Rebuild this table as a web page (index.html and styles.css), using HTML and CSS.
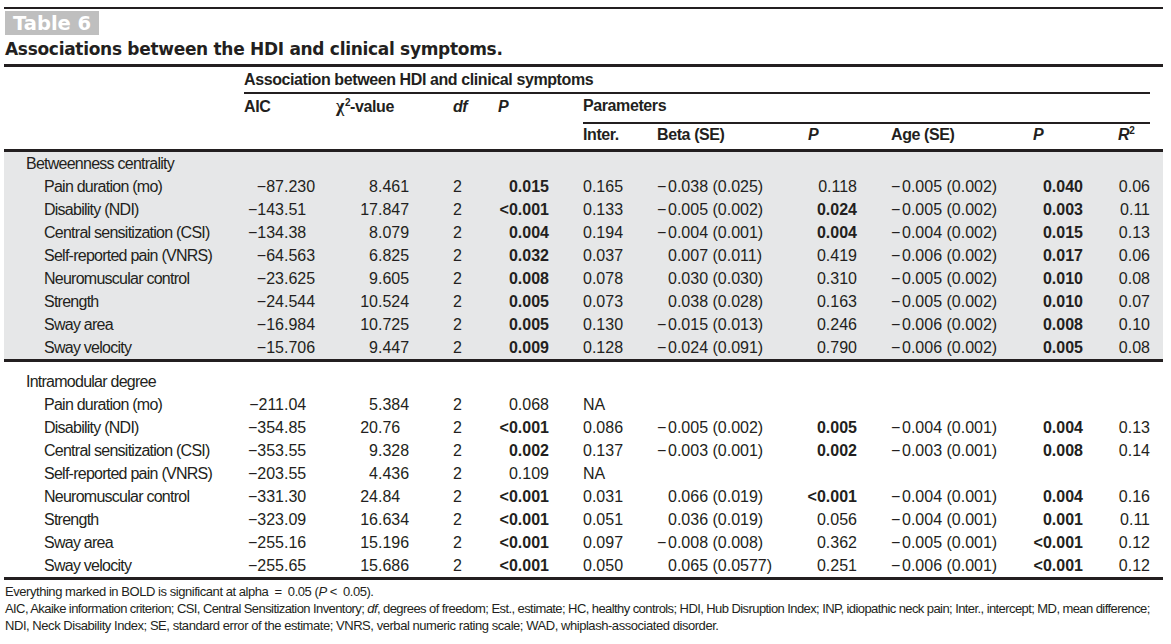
FILE: index.html
```html
<!DOCTYPE html>
<html lang="en">
<head>
<meta charset="utf-8">
<title>Table 6</title>
<link rel="stylesheet" href="styles.css">
</head>
<body>
<div class="page">
  <div class="toprule"></div>
  <div class="tag">Table 6</div>
  <h1 class="title">Associations between the HDI and clinical symptoms.</h1>
  <table class="tbl">
    <colgroup>
      <col class="w0"><col class="w1"><col class="w2"><col class="w3"><col class="w4"><col class="w5">
      <col class="w6"><col class="w7"><col class="w8"><col class="w9"><col class="w10"><col class="w11">
    </colgroup>
    <thead>
      <tr class="h1">
        <th></th>
        <th colspan="10" class="spanhead">Association between HDI and clinical symptoms</th>
        <th></th>
      </tr>
      <tr class="h2">
        <th></th>
        <th>AIC</th>
        <th><span class="chi">χ</span><sup>2</sup>-value</th>
        <th class="c-df"><i>df</i></th>
        <th class="c-p"><i>P</i></th>
        <th colspan="6" class="spanhead">Parameters</th>
        <th></th>
      </tr>
      <tr class="h3">
        <th></th><th></th><th></th><th></th><th></th>
        <th>Inter.</th>
        <th>Beta (SE)</th>
        <th class="c-p2"><i>P</i></th>
        <th>Age (SE)</th>
        <th class="c-p3"><i>P</i></th>
        <th class="c-r2"><i>R</i><sup>2</sup></th>
        <th></th>
      </tr>
    </thead>
    <tbody class="grp shaded">
      <tr><td class="grouplabel">Betweenness centrality</td><td></td><td></td><td></td><td></td><td></td><td></td><td></td><td></td><td></td><td></td><td></td></tr>
      <tr><td class="lbl">Pain duration (mo)</td><td class="n aic"><span class="ip">−87</span>.230</td><td class="n chi2"><span class="ip">8</span>.461</td><td class="n df">2</td><td class="n pv"><b>0.015</b></td><td class="n">0.165</td><td class="n"><span class="m">−</span>0.038 (0.025)</td><td class="n pv2">0.118</td><td class="n"><span class="m">−</span>0.005 (0.002)</td><td class="n pv3"><b>0.040</b></td><td class="n r2">0.06</td><td></td></tr>
      <tr><td class="lbl">Disability (NDI)</td><td class="n aic"><span class="ip">−143</span>.51</td><td class="n chi2"><span class="ip">17</span>.847</td><td class="n df">2</td><td class="n pv"><b>&lt;0.001</b></td><td class="n">0.133</td><td class="n"><span class="m">−</span>0.005 (0.002)</td><td class="n pv2"><b>0.024</b></td><td class="n"><span class="m">−</span>0.005 (0.002)</td><td class="n pv3"><b>0.003</b></td><td class="n r2">0.11</td><td></td></tr>
      <tr><td class="lbl">Central sensitization (CSI)</td><td class="n aic"><span class="ip">−134</span>.38</td><td class="n chi2"><span class="ip">8</span>.079</td><td class="n df">2</td><td class="n pv"><b>0.004</b></td><td class="n">0.194</td><td class="n"><span class="m">−</span>0.004 (0.001)</td><td class="n pv2"><b>0.004</b></td><td class="n"><span class="m">−</span>0.004 (0.002)</td><td class="n pv3"><b>0.015</b></td><td class="n r2">0.13</td><td></td></tr>
      <tr><td class="lbl">Self-reported pain (VNRS)</td><td class="n aic"><span class="ip">−64</span>.563</td><td class="n chi2"><span class="ip">6</span>.825</td><td class="n df">2</td><td class="n pv"><b>0.032</b></td><td class="n">0.037</td><td class="n"><span class="m"></span>0.007 (0.011)</td><td class="n pv2">0.419</td><td class="n"><span class="m">−</span>0.006 (0.002)</td><td class="n pv3"><b>0.017</b></td><td class="n r2">0.06</td><td></td></tr>
      <tr><td class="lbl">Neuromuscular control</td><td class="n aic"><span class="ip">−23</span>.625</td><td class="n chi2"><span class="ip">9</span>.605</td><td class="n df">2</td><td class="n pv"><b>0.008</b></td><td class="n">0.078</td><td class="n"><span class="m"></span>0.030 (0.030)</td><td class="n pv2">0.310</td><td class="n"><span class="m">−</span>0.005 (0.002)</td><td class="n pv3"><b>0.010</b></td><td class="n r2">0.08</td><td></td></tr>
      <tr><td class="lbl">Strength</td><td class="n aic"><span class="ip">−24</span>.544</td><td class="n chi2"><span class="ip">10</span>.524</td><td class="n df">2</td><td class="n pv"><b>0.005</b></td><td class="n">0.073</td><td class="n"><span class="m"></span>0.038 (0.028)</td><td class="n pv2">0.163</td><td class="n"><span class="m">−</span>0.005 (0.002)</td><td class="n pv3"><b>0.010</b></td><td class="n r2">0.07</td><td></td></tr>
      <tr><td class="lbl">Sway area</td><td class="n aic"><span class="ip">−16</span>.984</td><td class="n chi2"><span class="ip">10</span>.725</td><td class="n df">2</td><td class="n pv"><b>0.005</b></td><td class="n">0.130</td><td class="n"><span class="m">−</span>0.015 (0.013)</td><td class="n pv2">0.246</td><td class="n"><span class="m">−</span>0.006 (0.002)</td><td class="n pv3"><b>0.008</b></td><td class="n r2">0.10</td><td></td></tr>
      <tr><td class="lbl">Sway velocity</td><td class="n aic"><span class="ip">−15</span>.706</td><td class="n chi2"><span class="ip">9</span>.447</td><td class="n df">2</td><td class="n pv"><b>0.009</b></td><td class="n">0.128</td><td class="n"><span class="m">−</span>0.024 (0.091)</td><td class="n pv2">0.790</td><td class="n"><span class="m">−</span>0.006 (0.002)</td><td class="n pv3"><b>0.005</b></td><td class="n r2">0.08</td><td></td></tr>
    </tbody>
    <tbody class="grp plain">
      <tr class="first"><td class="grouplabel">Intramodular degree</td><td></td><td></td><td></td><td></td><td></td><td></td><td></td><td></td><td></td><td></td><td></td></tr>
      <tr><td class="lbl">Pain duration (mo)</td><td class="n aic"><span class="ip">−211</span>.04</td><td class="n chi2"><span class="ip">5</span>.384</td><td class="n df">2</td><td class="n pv">0.068</td><td class="n">NA</td><td></td><td></td><td></td><td></td><td></td><td></td></tr>
      <tr><td class="lbl">Disability (NDI)</td><td class="n aic"><span class="ip">−354</span>.85</td><td class="n chi2"><span class="ip">20</span>.76</td><td class="n df">2</td><td class="n pv"><b>&lt;0.001</b></td><td class="n">0.086</td><td class="n"><span class="m">−</span>0.005 (0.002)</td><td class="n pv2"><b>0.005</b></td><td class="n"><span class="m">−</span>0.004 (0.001)</td><td class="n pv3"><b>0.004</b></td><td class="n r2">0.13</td><td></td></tr>
      <tr><td class="lbl">Central sensitization (CSI)</td><td class="n aic"><span class="ip">−353</span>.55</td><td class="n chi2"><span class="ip">9</span>.328</td><td class="n df">2</td><td class="n pv"><b>0.002</b></td><td class="n">0.137</td><td class="n"><span class="m">−</span>0.003 (0.001)</td><td class="n pv2"><b>0.002</b></td><td class="n"><span class="m">−</span>0.003 (0.001)</td><td class="n pv3"><b>0.008</b></td><td class="n r2">0.14</td><td></td></tr>
      <tr><td class="lbl">Self-reported pain (VNRS)</td><td class="n aic"><span class="ip">−203</span>.55</td><td class="n chi2"><span class="ip">4</span>.436</td><td class="n df">2</td><td class="n pv">0.109</td><td class="n">NA</td><td></td><td></td><td></td><td></td><td></td><td></td></tr>
      <tr><td class="lbl">Neuromuscular control</td><td class="n aic"><span class="ip">−331</span>.30</td><td class="n chi2"><span class="ip">24</span>.84</td><td class="n df">2</td><td class="n pv"><b>&lt;0.001</b></td><td class="n">0.031</td><td class="n"><span class="m"></span>0.066 (0.019)</td><td class="n pv2"><b>&lt;0.001</b></td><td class="n"><span class="m">−</span>0.004 (0.001)</td><td class="n pv3"><b>0.004</b></td><td class="n r2">0.16</td><td></td></tr>
      <tr><td class="lbl">Strength</td><td class="n aic"><span class="ip">−323</span>.09</td><td class="n chi2"><span class="ip">16</span>.634</td><td class="n df">2</td><td class="n pv"><b>&lt;0.001</b></td><td class="n">0.051</td><td class="n"><span class="m"></span>0.036 (0.019)</td><td class="n pv2">0.056</td><td class="n"><span class="m">−</span>0.004 (0.001)</td><td class="n pv3"><b>0.001</b></td><td class="n r2">0.11</td><td></td></tr>
      <tr><td class="lbl">Sway area</td><td class="n aic"><span class="ip">−255</span>.16</td><td class="n chi2"><span class="ip">15</span>.196</td><td class="n df">2</td><td class="n pv"><b>&lt;0.001</b></td><td class="n">0.097</td><td class="n"><span class="m">−</span>0.008 (0.008)</td><td class="n pv2">0.362</td><td class="n"><span class="m">−</span>0.005 (0.001)</td><td class="n pv3"><b>&lt;0.001</b></td><td class="n r2">0.12</td><td></td></tr>
      <tr><td class="lbl">Sway velocity</td><td class="n aic"><span class="ip">−255</span>.65</td><td class="n chi2"><span class="ip">15</span>.686</td><td class="n df">2</td><td class="n pv"><b>&lt;0.001</b></td><td class="n">0.050</td><td class="n"><span class="m"></span>0.065 (0.0577)</td><td class="n pv2">0.251</td><td class="n"><span class="m">−</span>0.006 (0.001)</td><td class="n pv3"><b>&lt;0.001</b></td><td class="n r2">0.12</td><td></td></tr>
    </tbody>
  </table>
  <div class="notes">
    <p>Everything marked in BOLD is significant at alpha <span class="eq">=</span> 0.05 (<i>P</i><span class="lt">&lt;</span> 0.05).</p>
    <p class="tight">AIC, Akaike information criterion; CSI, Central Sensitization Inventory; <i>df</i>, degrees of freedom; Est., estimate; HC, healthy controls; HDI, Hub Disruption Index; INP, idiopathic neck pain; Inter., intercept; MD, mean difference;</p>
    <p>NDI, Neck Disability Index; SE, standard error of the estimate; VNRS, verbal numeric rating scale; WAD, whiplash-associated disorder.</p>
  </div>
</div>
</body>
</html>
```

FILE: styles.css
```css
html, body {
  margin: 0;
  padding: 0;
  background: #ffffff;
}

body {
  color: #231f20;
  font-family: "Liberation Sans", Arial, sans-serif;
}

.page {
  width: 1159px;
  padding: 7px 0 0 4px;
}

.toprule {
  height: 2px;
  background: #231f20;
}

.tag {
  width: fit-content;
  margin: 2px 0 0 1px;
  padding: 0 8px 0 8px;
  height: 24px;
  line-height: 25px;
  background: #bfbfbf;
  color: #ffffff;
  font-family: "DejaVu Sans", "Liberation Sans", sans-serif;
  font-weight: bold;
  font-size: 19.5px;
}

.title {
  margin: 3px 0 4px 1px;
  font-family: "DejaVu Sans", "Liberation Sans", sans-serif;
  font-weight: bold;
  font-size: 17px;
  line-height: 22px;
  letter-spacing: -0.3px;
}

.tbl {
  width: 1159px;
  table-layout: fixed;
  border-collapse: collapse;
  border-spacing: 0;
  border-top: 3px solid #231f20;
  font-size: 16px;
}

.w0 { width: 240px; }
.w1 { width: 92px; }
.w2 { width: 109px; }
.w3 { width: 45px; }
.w4 { width: 93px; }
.w5 { width: 74px; }
.w6 { width: 133px; }
.w7 { width: 101px; }
.w8 { width: 129px; }
.w9 { width: 80px; }
.w10 { width: 50px; }
.w11 { width: 13px; }

.tbl th,
.tbl td {
  padding: 0;
  text-align: left;
  white-space: nowrap;
}

.tbl th {
  font-weight: bold;
  letter-spacing: -0.4px;
}

.tbl thead {
  border-bottom: 3px solid #231f20;
}

.h1 th {
  line-height: 25px;
}

.h2 th {
  line-height: 24px;
  padding-bottom: 4px;
}

.h3 th {
  line-height: 21px;
  padding-bottom: 4px;
}

.tbl .spanhead {
  border-bottom: 2px solid #231f20;
}

.tbl th sup {
  font-size: 10px;
  line-height: 0;
  vertical-align: 6px;
}

.chi {
  font-family: "Liberation Serif", serif;
  font-size: 18px;
  margin-right: 1px;
}

.tbl .c-df { padding-left: 8px; }
.tbl .c-p { padding-left: 8px; }
.tbl .c-p2 { padding-left: 18px; }
.tbl .c-p3 { padding-left: 13px; }
.tbl .c-r2 { padding-left: 18px; }

.grp {
  border-bottom: 3px solid #231f20;
}

.shaded td {
  background: #e6e7e8;
}

.tbl td {
  line-height: 23px;
  letter-spacing: -0.75px;
}

.plain .first td {
  padding-top: 8px;
}

.tbl .grouplabel {
  padding-left: 22px;
}

.tbl .lbl {
  padding-left: 40px;
}

.tbl .n {
  letter-spacing: 0;
}

.ip {
  display: inline-block;
  text-align: right;
}

.aic .ip { width: 40px; }
.chi2 .ip { width: 42px; }

.tbl .df { padding-left: 8px; }
.tbl .pv { text-align: right; padding-right: 34px; }
.tbl .pv2 { text-align: right; padding-right: 34px; }
.tbl .pv3 { text-align: right; padding-right: 17px; }
.tbl .r2 { text-align: right; }

.m {
  display: inline-block;
  width: 11px;
}

.notes {
  margin-top: 3px;
  font-size: 13px;
  line-height: 17px;
  letter-spacing: -0.45px;
}

.notes p {
  margin: 0 0 0 1px;
  white-space: nowrap;
}

.notes .tight {
  letter-spacing: -0.58px;
}

.eq,
.lt {
  margin: 0 3px;
}
```
